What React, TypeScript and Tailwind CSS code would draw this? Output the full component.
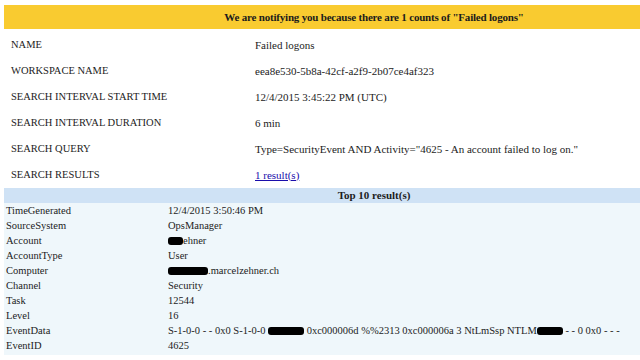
import React from 'react';

const summary: [string, React.ReactNode][] = [
  ['NAME', 'Failed logons'],
  ['WORKSPACE NAME', 'eea8e530-5b8a-42cf-a2f9-2b07ce4af323'],
  ['SEARCH INTERVAL START TIME', '12/4/2015 3:45:22 PM (UTC)'],
  ['SEARCH INTERVAL DURATION', '6 min'],
  ['SEARCH QUERY', 'Type=SecurityEvent AND Activity="4625 - An account failed to log on."'],
  ['SEARCH RESULTS', <a className="text-[#1a0dab] underline" href="#">1 result(s)</a>],
];

// black marker used to hide names in the original
const Blot = ({ w }: { w: string }) => (
  <span className={`inline-block h-[8px] bg-black rounded-[3px] align-middle ${w}`} />
);

const results: [string, React.ReactNode][] = [
  ['TimeGenerated', '12/4/2015 3:50:46 PM'],
  ['SourceSystem', 'OpsManager'],
  ['Account', <><Blot w="w-[15px]" />ehner</>],
  ['AccountType', 'User'],
  ['Computer', <><Blot w="w-[40px]" />.marcelzehner.ch</>],
  ['Channel', 'Security'],
  ['Task', '12544'],
  ['Level', '16'],
  [
    'EventData',
    <>
      S-1-0-0 - - 0x0 S-1-0-0 <Blot w="w-[36px]" /> 0xc000006d %%2313 0xc000006a 3 NtLmSsp NTLM
      <Blot w="w-[26px]" /> - - 0 0x0 - - -
    </>,
  ],
  ['EventID', '4625'],
];

export default function App() {
  return (
    <div className="w-[640px] h-[360px] overflow-hidden bg-white pl-1 pt-[5px] text-[#1c1c1c] font-['Liberation_Serif',serif]">
      <div className="h-[24px] bg-[#f9cb30] flex items-center justify-center pl-[104px] text-[11px] tracking-[-0.2px] font-bold">
        We are notifying you because there are 1 counts of "Failed logons"
      </div>

      <div className="pt-[3px]">
        {summary.map(([k, v]) => (
          <div key={k} className="h-[26px] flex items-center">
            <div className="w-[251px] pl-[7px] shrink-0 text-[10.5px]">{k}</div>
            <div className="text-[11px]">{v}</div>
          </div>
        ))}
      </div>

      <div className="h-[15px] bg-[#cfe2f5] flex items-center justify-center pl-[104px] text-[11px] font-bold">
        Top 10 result(s)
      </div>

      <div className="bg-[#eff7fb] h-[152px]">
        {results.map(([k, v]) => (
          <div key={k} className="h-[15px] flex items-center text-[10.5px] whitespace-nowrap">
            <div className="w-[164px] pl-[2px] shrink-0">{k}</div>
            <div>{v}</div>
          </div>
        ))}
      </div>
    </div>
  );
}
